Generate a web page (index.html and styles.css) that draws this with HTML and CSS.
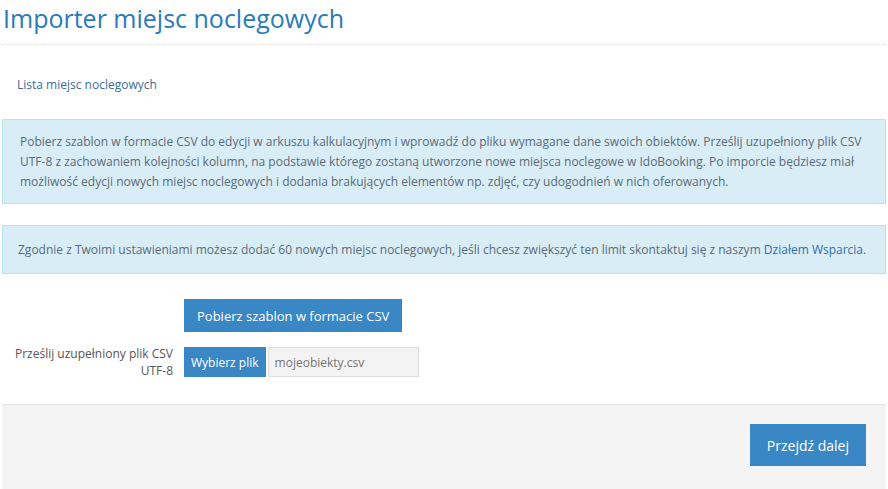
FILE: index.html
```html
<!DOCTYPE html>
<html lang="pl">
<head>
    <meta charset="UTF-8">
    <meta name="viewport" content="width=device-width, initial-scale=1.0">
    <title>Importer miejsc noclegowych</title>
    <link rel="stylesheet" href="styles.css">
</head>
<body>
    <div class="page">
        <h1 class="page-title">Importer miejsc noclegowych</h1>

        <div class="breadcrumbs">
            <a href="#">Lista miejsc noclegowych</a>
        </div>

        <div class="alert">
            Pobierz szablon w formacie CSV do edycji w arkuszu kalkulacyjnym i wprowadź do pliku wymagane dane swoich obiektów. Prześlij uzupełniony plik CSV UTF-8 z zachowaniem kolejności kolumn, na podstawie którego zostaną utworzone nowe miejsca noclegowe w IdoBooking. Po imporcie będziesz miał możliwość edycji nowych miejsc noclegowych i dodania brakujących elementów np. zdjęć, czy udogodnień w nich oferowanych.
        </div>

        <div class="alert alert-limit">
            Zgodnie z Twoimi ustawieniami możesz dodać 60 nowych miejsc noclegowych, jeśli chcesz zwiększyć ten limit skontaktuj się z naszym <a href="#">Działem Wsparcia</a>.
        </div>

        <div class="form-row">
            <div class="form-label"></div>
            <div class="form-field">
                <button class="button">Pobierz szablon w formacie CSV</button>
            </div>
        </div>
        <div class="form-row">
            <label class="form-label">Prześlij uzupełniony plik CSV UTF-8</label>
            <div class="form-field">
                <button class="button button-small">Wybierz plik</button>
                <input class="file-name" type="text" placeholder="mojeobiekty.csv" readonly>
            </div>
        </div>

        <div class="form-footer">
            <button class="button button-large">Przejdź dalej</button>
        </div>
    </div>
</body>
</html>
```

FILE: styles.css
```css
body {
    font-family: "Open Sans", Arial, sans-serif;
    font-size: 12px;
    color: #555;
    background: white;
    margin: 0;
    padding: 0;
}
a {
    color: #2f6ea5;
    text-decoration: none;
}
.page {
    padding: 0 2px;
}
.page-title {
    margin: 0;
    padding: 0 0 8px 1px;
    font-size: 25px;
    font-weight: normal;
    line-height: 36px;
    color: #2a7ab8;
    border-bottom: 1px dotted #ddd;
}
.breadcrumbs {
    padding: 31px 15px 0;
    line-height: 18px;
    height: 43px;
}
.breadcrumbs a {
    color: #3a6d99;
}
.alert {
    margin-bottom: 21px;
    padding: 12px 17px 11px;
    line-height: 20px;
    color: #5a6b78;
    background: #d9edf7;
    border: 1px solid #b6e5ef;
}
.alert-limit {
    padding: 14px 17px 13px 15px;
    margin-bottom: 25px;
}
.form-row {
    display: flex;
    align-items: center;
    margin-bottom: 13px;
}
.form-label {
    width: 171px;
    padding-right: 11px;
    text-align: right;
    line-height: 17px;
    color: #555;
}
.form-field {
    display: flex;
}
.button {
    padding: 0 13px;
    height: 33px;
    font-family: inherit;
    font-size: 13px;
    color: white;
    background-color: #3a87c5;
    border: none;
    cursor: pointer;
}
.button:hover {
    background-color: #2f73aa;
}
.button-small {
    height: 30px;
    padding: 0 7px;
    font-size: 12px;
}
.file-name {
    width: 151px;
    height: 30px;
    margin-left: 2px;
    padding: 0 6px;
    font-family: inherit;
    font-size: 12px;
    color: #999;
    background: #f3f3f3;
    border: 1px solid #ddd;
    box-sizing: border-box;
}
.form-footer {
    display: flex;
    justify-content: flex-end;
    margin-top: 25px;
    padding: 19px 20px 23px;
    background: #f4f4f4;
    border-top: 1px solid #e3e3e3;
}
.button-large {
    height: 42px;
    padding: 0 17px;
    font-size: 14px;
}
```
